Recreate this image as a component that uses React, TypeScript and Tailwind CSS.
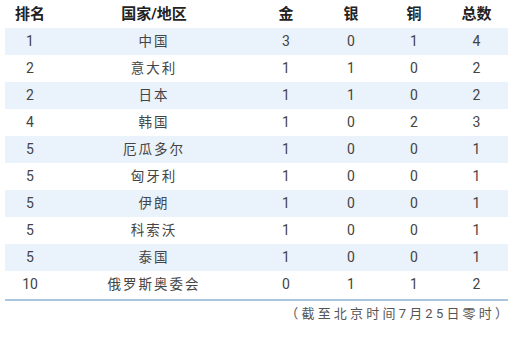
const rows = [
  { rank: "1", name: "中国", g: 3, s: 0, b: 1, t: 4 },
  { rank: "2", name: "意大利", g: 1, s: 1, b: 0, t: 2 },
  { rank: "2", name: "日本", g: 1, s: 1, b: 0, t: 2 },
  { rank: "4", name: "韩国", g: 1, s: 0, b: 2, t: 3 },
  { rank: "5", name: "厄瓜多尔", g: 1, s: 0, b: 0, t: 1 },
  { rank: "5", name: "匈牙利", g: 1, s: 0, b: 0, t: 1 },
  { rank: "5", name: "伊朗", g: 1, s: 0, b: 0, t: 1 },
  { rank: "5", name: "科索沃", g: 1, s: 0, b: 0, t: 1 },
  { rank: "5", name: "泰国", g: 1, s: 0, b: 0, t: 1 },
  { rank: "10", name: "俄罗斯奥委会", g: 0, s: 1, b: 1, t: 2 },
];

const cols = "grid grid-cols-[50px_198px_66px_64px_62px_63px] items-center";

export default function App() {
  return (
    <div
      className="w-[510px] h-[339px] bg-white pl-[5px] pr-[2px]"
      style={{ fontFamily: 'Roboto, "Noto Sans CJK SC", sans-serif' }}
    >
      <div className={`${cols} h-[28px] text-[15px] font-bold text-[#222] text-center`}>
        <div>排名</div>
        <div>国家/地区</div>
        <div>金</div>
        <div>银</div>
        <div>铜</div>
        <div>总数</div>
      </div>
      {rows.map((r, i) => (
        <div
          key={i}
          className={`${cols} h-[27px] text-[14px] text-[#444] text-center ${
            i % 2 === 0 ? "bg-[#eaf2fc]" : "bg-white"
          }`}
        >
          <div>{r.rank}</div>
          <div className="tracking-[2px] text-[13.5px]">{r.name}</div>
          <div>{r.g}</div>
          <div>{r.s}</div>
          <div>{r.b}</div>
          <div>{r.t}</div>
        </div>
      ))}
      <div className="h-[2px] bg-[#aac5de] mt-[1px]" />
      <div className="flex justify-end pt-[3px] text-[13px] text-[#555]">
        <span className="tracking-[3.2px]">（截至北京时间7月25日零时</span>
        <span>）</span>
      </div>
    </div>
  );
}
